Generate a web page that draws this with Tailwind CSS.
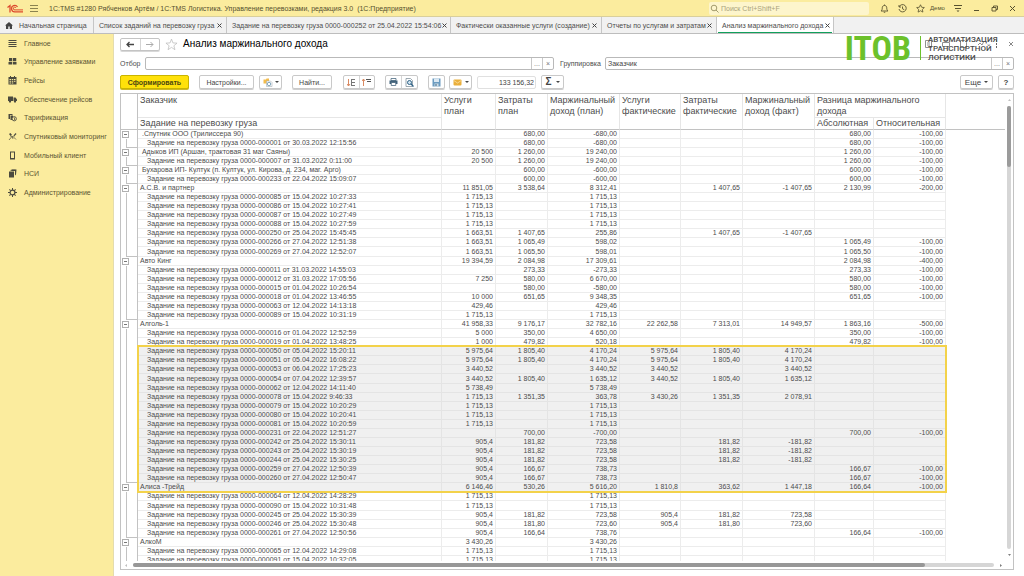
<!DOCTYPE html>
<html lang="ru">
<head>
<meta charset="utf-8">
<title>Анализ маржинального дохода</title>
<script src="https://cdn.jsdelivr.net/npm/@tailwindcss/browser@4"></script>
</head>
<body class="h-screen overflow-hidden flex flex-col bg-white font-['Liberation_Sans',Arial,sans-serif] text-[7px] leading-[9px] text-[#4c4c4c]">

<header class="h-[17px] shrink-0 flex items-center bg-[#fbec9e] border-b border-[#d9cf9c] pl-[7px] pr-[3px] text-[#55502f]">
  <svg class="w-[16px] h-[9px] shrink-0" viewBox="0 0 16 9" fill="none" stroke="#dd4a2e" stroke-width="1.300" aria-label="1С"><path d="M0.500 3.500L3 1.500V8.500"/><path d="M10.500 3A3.200 3.200 0 1 0 8 7.800H16"/><path d="M9 4A1.400 1.400 0 1 0 8 5.900H16" stroke-width="1"/></svg>
  <button class="ml-[6px] flex" aria-label="Меню"><svg class="w-[10px] h-[8px]" viewBox="0 0 10 8" stroke="#8b8350" stroke-width="1"><path d="M1 1.500h8M1 4.500h8M1 7.500h8"/></svg></button>
  <span class="ml-[10px] whitespace-pre">1С:TMS #1280 Рябченков Артём / 1С:TMS Логистика. Управление перевозками, редакция 3.0  (1С:Предприятие)</span>
  <label class="ml-auto w-[160px] h-[13px] bg-[#fdf5cc] rounded-[2px] flex items-center gap-[2px] pl-[1px]">
    <svg class="w-[9px] h-[9px]" viewBox="0 0 9 9" fill="none" stroke="#a39b6d"><circle cx="4" cy="4" r="2.800"/><path d="M6 6l2.500 2.500"/></svg>
    <input type="search" placeholder="Поиск Ctrl+Shift+F" aria-label="Поиск" class="w-[140px] bg-transparent outline-none placeholder:text-[#aaa37c]">
  </label>
  <div class="ml-[6px] flex items-center">
    <button class="w-[18px] flex justify-center" aria-label="Уведомления"><svg class="w-[9px] h-[9px]" viewBox="0 0 18 18" fill="none" stroke="#57512f" stroke-width="1.800"><path d="M2 14h14c-2-2-2.500-3-2.500-6.500C13.500 4.500 11.500 3 9 3S4.500 4.500 4.500 7.500C4.500 11 4 12 2 14zM9 1v2M7.500 16.500h3"/></svg></button>
    <button class="w-[18px] flex justify-center" aria-label="История"><svg class="w-[9px] h-[9px]" viewBox="0 0 18 18" fill="none" stroke="#57512f" stroke-width="1.800"><path d="M2.500 5.500A7.300 7.300 0 1 1 2 10M2 2v4h4M9 5v4.500l3.500 2"/></svg></button>
    <button class="w-[18px] flex justify-center" aria-label="Избранное"><svg class="w-[9px] h-[9px]" viewBox="0 0 18 18" fill="none" stroke="#57512f" stroke-width="1.600"><path d="M9 1.500l2.300 5 5.400.6-4 3.700 1.100 5.400L9 13.500l-4.800 2.700 1.100-5.400-4-3.700 5.400-.6z"/></svg></button>
    <a href="#" class="ml-[1px] text-[6px] w-[19px]">Демо</a>
    <button class="w-[18px] flex justify-center" aria-label="Настройки окна"><svg class="w-[10px] h-[9px]" viewBox="0 0 10 9" stroke="#57512f" fill="#57512f"><path d="M1 1.500h8M2 4.500h6" /><path d="M3.500 6.500h3L5 8z" stroke="none"/></svg></button>
    <button class="w-[18px] flex justify-center" aria-label="Свернуть"><svg class="w-[7px] h-[7px]" viewBox="0 0 7 7" stroke="#57512f"><path d="M1 5.500h5"/></svg></button>
    <button class="w-[18px] flex justify-center" aria-label="Восстановить"><svg class="w-[7px] h-[7px]" viewBox="0 0 14 14" fill="none" stroke="#57512f" stroke-width="1.800"><path d="M2 5h8v7H2zM5 5V2h8v7h-3"/></svg></button>
    <button class="w-[18px] flex justify-center" aria-label="Закрыть окно"><svg class="w-[7px] h-[7px]" viewBox="0 0 7 7" stroke="#57512f"><path d="M1 1l5 5M6 1L1 6"/></svg></button>
  </div>
</header>

<div role="tablist" class="h-[17px] shrink-0 flex bg-[#f1f1f1] border-b border-[#bdbdbd] whitespace-nowrap">
  <button role="tab" class="w-[94px] shrink-0 border-r border-[#c6c6c6] flex items-center pl-[5px] gap-[6px]"><svg class="w-[8px] h-[7px]" viewBox="0 0 16 14" fill="#444"><path d="M8 0L0 7h2v7h4.500V9h3v5H14V7h2z"/></svg>Начальная страница</button>
  <div class="w-[133px] shrink-0 border-r border-[#c6c6c6] flex items-center justify-between pl-[5px] pr-[4px]"><button role="tab">Список заданий на перевозку груза</button><button class="tabx" aria-label="Закрыть"></button></div>
  <div class="w-[224px] shrink-0 border-r border-[#c6c6c6] flex items-center justify-between pl-[5px] pr-[3px]"><button role="tab">Задание на перевозку груза 0000-000252 от 25.04.2022 15:54:06</button><button class="tabx" aria-label="Закрыть"></button></div>
  <div class="w-[151px] shrink-0 border-r border-[#c6c6c6] flex items-center justify-between pl-[5px] pr-[4px]"><button role="tab">Фактически оказанные услуги (создание)</button><button class="tabx" aria-label="Закрыть"></button></div>
  <div class="w-[115px] shrink-0 border-r border-[#c6c6c6] flex items-center justify-between pl-[5px] pr-[4px]"><button role="tab">Отчеты по услугам и затратам</button><button class="tabx" aria-label="Закрыть"></button></div>
  <div class="w-[117px] shrink-0 border-r border-[#c6c6c6] bg-white flex items-center justify-between pl-[5px] pr-[3px] relative"><button role="tab" aria-selected="true">Анализ маржинального дохода</button><button class="tabx" aria-label="Закрыть"></button><i class="absolute left-[1px] right-[1px] bottom-0 h-[1px] bg-[#12a05c]"></i></div>
</div>

<div class="flex-1 min-h-0 flex">
  <nav class="w-[114px] shrink-0 bg-[#fbec9e] border-r border-[#e4dcae]">
    <ul class="h-[168px] grid grid-rows-9 items-center pl-[8px] text-[#5b5533]" id="menu"></ul>
  </nav>

  <main class="flex-1 min-w-0 flex flex-col pl-[6px] pr-[10px] pb-[6px] relative">
    <div class="h-[20px] shrink-0 flex items-center">
      <div class="flex h-[13px] w-[40px] border border-[#c4c4c4] rounded-[2px] shadow-[0_1px_0_#d8d8d8]">
        <button class="flex-1 flex items-center justify-center border-r border-[#d4d4d4]" aria-label="Назад"><svg class="w-[8px] h-[7px]" viewBox="0 0 8 7" fill="none" stroke="#444" stroke-width="1.300"><path d="M8 3.500H1M3.500 1L1 3.500 3.500 6"/></svg></button>
        <button class="flex-1 flex items-center justify-center" aria-label="Вперёд"><svg class="w-[8px] h-[7px]" viewBox="0 0 8 7" fill="none" stroke="#aaa"><path d="M0 3.500h7M4.500 1L7 3.500 4.500 6"/></svg></button>
      </div>
      <button class="ml-[5px]" aria-label="В избранное"><svg class="w-[13px] h-[13px]" viewBox="0 0 18 18" fill="none" stroke="#b9b9b9"><path d="M9 1.500l2 5.300 5.700.3-4.400 3.600 1.500 5.500L9 13l-4.800 3.200 1.500-5.500L1.300 7.100 7 6.800z"/></svg></button>
      <h1 class="ml-[5px] text-[10px] leading-[12px] text-black whitespace-nowrap">Анализ маржинального дохода</h1>
      <div class="ml-auto flex items-center gap-[10px] text-[#8f8f8f]">
        <svg class="w-[7px] h-[8px]" viewBox="0 0 7 8" fill="none" stroke="currentColor"><path d="M.500.500h6v7h-6zM2 3h3M2 5h3"/></svg>
        <svg class="w-[8px] h-[8px]" viewBox="0 0 8 8" fill="none" stroke="currentColor"><path d="M.500 2.500h7v4h-7zM2 .500h4"/></svg>
        <svg class="w-[7px] h-[8px]" viewBox="0 0 7 8" fill="none" stroke="currentColor"><path d="M.500.500h4l2 2v5h-6z"/></svg>
        <svg class="w-[8px] h-[8px]" viewBox="0 0 8 8" fill="none" stroke="currentColor"><path d="M1 5l2-2 2 2 2-4"/></svg>
        <button aria-label="Ещё действия"><svg class="w-[3px] h-[8px]" viewBox="0 0 3 8" fill="#666"><path d="M1 0h1v2H1zM1 3h1v2H1zM1 6h1v2H1z"/></svg></button>
        <button aria-label="Закрыть форму"><svg class="w-[6px] h-[6px]" viewBox="0 0 6 6" stroke="#888"><path d="M1 1l4 4M5 1L1 5"/></svg></button>
      </div>
    </div>

    <div class="h-[19px] shrink-0 flex items-center">
      <label for="flt" class="w-[25px]">Отбор</label>
      <div class="w-[409px] h-[13px] flex border border-[#b9b9b9] rounded-[2px] text-[#777]">
        <input id="flt" class="flex-1 min-w-0 outline-none px-[2px]">
        <button class="w-[11px] border-l border-[#c8c8c8] text-center" aria-label="Выбрать отбор">...</button>
        <button class="w-[11px] border-l border-[#c8c8c8] text-center" aria-label="Очистить отбор">×</button>
      </div>
      <label for="grp" class="ml-[6px] w-[45px]">Группировка</label>
      <div class="flex-1 h-[13px] flex border border-[#b9b9b9] rounded-[2px] text-[#777]">
        <input id="grp" value="Заказчик" class="flex-1 min-w-0 outline-none px-[2px] text-[#444]">
        <button class="w-[11px] border-l border-[#c8c8c8] text-center" aria-label="Выбрать группировку">...</button>
        <button class="w-[11px] border-l border-[#c8c8c8] text-center" aria-label="Очистить группировку">×</button>
      </div>
    </div>

    <div class="h-[18px] shrink-0 flex items-center text-[#444]">
      <button class="w-[69px] h-[14px] rounded-[2px] border border-[#c9b400] bg-[#ffe10a] shadow-[0_1px_0_#cdb92c] font-bold text-[#4c4610]">Сформировать</button>
      <button class="ml-[10px] w-[55px] h-[14px] rounded-[2px] border border-[#c9c9c9] shadow-[0_1px_0_#cfcfcf]">Настройки...</button>
      <button class="ml-[5px] w-[23px] h-[14px] rounded-[2px] border border-[#c9c9c9] shadow-[0_1px_0_#cfcfcf] flex items-center justify-center gap-[2px]" aria-label="Варианты"><svg class="w-[10px] h-[9px]" viewBox="0 0 20 18" fill="none"><path d="M1 3h5l1-2h5v10H1z" fill="#f3bc4c"/><path d="M7 6h8l3 3v8H7z" fill="#fff" stroke="#9aa3a8"/><circle cx="12" cy="12" r="3.500" stroke="#5b89a6" stroke-width="1.500"/></svg><svg class="w-[4px] h-[2px]" viewBox="0 0 4 2" fill="#444"><path d="M0 0h4L2 2z"/></svg></button>
      <button class="ml-[10px] w-[40px] h-[14px] rounded-[2px] border border-[#c9c9c9] shadow-[0_1px_0_#cfcfcf]">Найти...</button>
      <div class="ml-[11px] w-[32px] h-[14px] flex rounded-[2px] border border-[#c9c9c9] shadow-[0_1px_0_#cfcfcf]">
        <button class="flex-1 border-r border-[#d4d4d4] flex items-center justify-center" aria-label="Развернуть группы"><svg class="w-[9px] h-[9px]" viewBox="0 0 9 9" fill="none"><path d="M1.500 1v7M0 6l1.500 2L3 6" stroke="#d98a62"/><path d="M4 1.500h4M5 4.500h3M5 7.500h3M4.500 2v6" stroke="#777"/></svg></button>
        <button class="flex-1 flex items-center justify-center" aria-label="Свернуть группы"><svg class="w-[9px] h-[9px]" viewBox="0 0 9 9" fill="none"><path d="M1.500 8V1M0 3l1.500-2L3 3" stroke="#d98a62"/><path d="M4 1.500h5M5 3.500h4" stroke="#555"/></svg></button>
      </div>
      <div class="ml-[10px] w-[33px] h-[14px] flex rounded-[2px] border border-[#c9c9c9] shadow-[0_1px_0_#cfcfcf]">
        <button class="flex-1 border-r border-[#d4d4d4] flex items-center justify-center" aria-label="Печать"><svg class="w-[9px] h-[8px]" viewBox="0 0 18 16"><path d="M4 1h10v4H4z" fill="#fff" stroke="#41627a" stroke-width="1.500"/><path d="M1 5h16v7H1z" fill="#41627a"/><path d="M4.500 9h9v6h-9z" fill="#fff" stroke="#41627a" stroke-width="1.500"/></svg></button>
        <button class="flex-1 flex items-center justify-center" aria-label="Просмотр"><svg class="w-[9px] h-[9px]" viewBox="0 0 18 18" fill="none"><path d="M2 1h9l4 4v12H2z" fill="#fff" stroke="#7d8d98" stroke-width="1.500"/><circle cx="9" cy="9" r="4" fill="#cfe3f0" stroke="#2f6286" stroke-width="2"/><path d="M12 12l5 5" stroke="#2f6286" stroke-width="2.500"/></svg></button>
      </div>
      <button class="ml-[10px] w-[17px] h-[14px] rounded-[2px] border border-[#c9c9c9] shadow-[0_1px_0_#cfcfcf] flex items-center justify-center" aria-label="Сохранить"><svg class="w-[9px] h-[9px]" viewBox="0 0 18 18"><path d="M1 1h16v16H1z" fill="#6b9bc0"/><path d="M4 1h10v7H4z" fill="#dbe8f2"/><path d="M5 11h8v6H5z" fill="#cfdce6"/><path d="M7 12h2v4H7z" fill="#3d6482"/></svg></button>
      <button class="ml-[4px] w-[23px] h-[14px] rounded-[2px] border border-[#c9c9c9] shadow-[0_1px_0_#cfcfcf] flex items-center justify-center gap-[3px]" aria-label="Отправить"><svg class="w-[9px] h-[7px]" viewBox="0 0 18 14"><rect x="1" y="1" width="16" height="12" rx="2" fill="#eaaf3b"/><path d="M1.500 3L9 8l7.500-5" fill="none" stroke="#fbe3ac" stroke-width="1.500"/></svg><svg class="w-[4px] h-[2px]" viewBox="0 0 4 2" fill="#444"><path d="M0 0h4L2 2z"/></svg></button>
      <input value="133 156,32" aria-label="Сумма" readonly class="ml-[5px] w-[59px] h-[13px] border border-[#e0e0e0] rounded-[2px] text-right pr-[1px] outline-none">
      <button class="ml-[5px] w-[23px] h-[14px] rounded-[2px] border border-[#c9c9c9] shadow-[0_1px_0_#cfcfcf] flex items-center justify-center gap-[4px] font-bold text-[10px] leading-[10px]" aria-label="Вычислить сумму">Σ<svg class="w-[4px] h-[2px]" viewBox="0 0 4 2" fill="#444"><path d="M0 0h4L2 2z"/></svg></button>
      <button class="ml-auto w-[33px] h-[14px] rounded-[2px] border border-[#c9c9c9] shadow-[0_1px_0_#cfcfcf] flex items-center justify-center gap-[3px] text-[8px]">Еще<svg class="w-[4px] h-[2px]" viewBox="0 0 4 2" fill="#444"><path d="M0 0h4L2 2z"/></svg></button>
      <button class="ml-[5px] w-[16px] h-[14px] rounded-[2px] border border-[#c9c9c9] shadow-[0_1px_0_#cfcfcf] font-bold text-[8px]" aria-label="Справка">?</button>
    </div>

    <section class="mt-[2px] flex-1 min-h-0 flex flex-col border border-[#c2c2c2]">
      <div class="flex-1 min-h-0 flex">
        <div class="flex-1 min-w-0 overflow-hidden relative">
          <table class="w-full table-fixed border-separate border-spacing-0 whitespace-nowrap">
            <colgroup><col class="w-[5px]"><col class="w-[12px]"><col class="w-[304px]"><col class="w-[54px]"><col class="w-[52px]"><col class="w-[72px]"><col class="w-[61px]"><col class="w-[62px]"><col class="w-[72px]"><col class="w-[59px]"><col class="w-[72px]"><col></colgroup>
            <thead class="text-[9px] leading-[11px] text-left">
              <tr class="h-[24px]">
                <td colspan="2" rowspan="2" class="border-r border-b border-[#c2c2c2]"></td>
                <th class="font-normal align-top pt-[1px] pl-[2px] border-r border-b border-[#e6e6e6]">Заказчик</th>
                <th rowspan="2" class="font-normal align-top pt-[1px] pl-[2px] border-r border-b border-r-[#e6e6e6] border-b-[#c2c2c2]">Услуги<br>план</th>
                <th rowspan="2" class="font-normal align-top pt-[1px] pl-[2px] border-r border-b border-r-[#e6e6e6] border-b-[#c2c2c2]">Затраты<br>план</th>
                <th rowspan="2" class="font-normal align-top pt-[1px] pl-[2px] border-r border-b border-r-[#e6e6e6] border-b-[#c2c2c2]">Маржинальный<br>доход (план)</th>
                <th rowspan="2" class="font-normal align-top pt-[1px] pl-[2px] border-r border-b border-r-[#e6e6e6] border-b-[#c2c2c2]">Услуги<br>фактические</th>
                <th rowspan="2" class="font-normal align-top pt-[1px] pl-[2px] border-r border-b border-r-[#e6e6e6] border-b-[#c2c2c2]">Затраты<br>фактические</th>
                <th rowspan="2" class="font-normal align-top pt-[1px] pl-[2px] border-r border-b border-r-[#e6e6e6] border-b-[#c2c2c2]">Маржинальный<br>доход (факт)</th>
                <th colspan="2" class="font-normal align-top pt-[1px] pl-[2px] border-r border-b border-[#e6e6e6]">Разница маржинального<br>дохода</th>
                <td rowspan="2" class="border-b border-[#c2c2c2]"></td>
              </tr>
              <tr class="h-[12px]">
                <th class="font-normal align-top pl-[2px] border-r border-b border-r-[#e6e6e6] border-b-[#c2c2c2]">Задание на перевозку груза</th>
                <th class="font-normal align-top pl-[2px] border-r border-b border-r-[#e6e6e6] border-b-[#c2c2c2]">Абсолютная</th>
                <th class="font-normal align-top pl-[2px] border-r border-b border-r-[#e6e6e6] border-b-[#c2c2c2]">Относительная</th>
              </tr>
            </thead>
            <tbody id="rows" class="leading-[8px]"></tbody>
          </table>
          <div class="absolute top-[251px] left-[16px] w-[810px] h-[148px] border-2 border-[#f3d24a] pointer-events-none"></div>
        </div>
        <div class="w-[8px] shrink-0 flex flex-col items-center">
          <svg class="mt-[5px] w-[3px] h-[2px]" viewBox="0 0 4 2" fill="#aaa"><path d="M0 2h4L2 0z"/></svg>
          <div class="mt-[5px] flex-1 w-[4px] rounded-full bg-[#d6d6d6]"><div class="h-[61px] rounded-full bg-[#9b9b9b]"></div></div>
          <svg class="mt-[5px] mb-[5px] w-[3px] h-[2px]" viewBox="0 0 4 2" fill="#555"><path d="M0 0h4L2 2z"/></svg>
        </div>
      </div>
      <div class="h-[8px] shrink-0 flex items-center pl-[4px] pr-[11px]">
        <svg class="w-[2px] h-[3px]" viewBox="0 0 2 4" fill="#aaa"><path d="M2 0v4L0 2z"/></svg>
        <div class="ml-[6px] flex-1 h-[4px] rounded-full bg-[#d6d6d6]"><div class="h-[4px] w-[92%] rounded-full bg-[#979797]"></div></div>
        <svg class="ml-[6px] w-[2px] h-[3px]" viewBox="0 0 2 4" fill="#555"><path d="M0 0v4l2-2z"/></svg>
      </div>
    </section>

    <div class="absolute top-0 right-[29px] flex items-center" aria-label="ITOB">
      <strong class="font-['Liberation_Sans_Narrow','Roboto_Condensed',Roboto,sans-serif] text-[34px] leading-[28px] text-[#6cc12b]">ITOB</strong>
      <i class="ml-[9px] w-[1px] h-[24px] bg-[#6cc12b]"></i>
      <p class="ml-[7px] w-[67px] whitespace-nowrap font-[Roboto,sans-serif] font-medium text-[8px] leading-[9px] text-[#4a4a4a]">АВТОМАТИЗАЦИЯ<br>ТРАНСПОРТНОЙ<br>ЛОГИСТИКИ</p>
    </div>
  </main>
</div>

<script>
const icons = {
  list: '<path d="M1 2h16v2H1zM1 6h16v2H1zM1 10h16v2H1zM1 14h16v2H1z"/>',
  blocks: '<path d="M2 2h6.500v6.500H2zM10 2h6.500v6.500H10zM1 10h7.500v5H1zM10 10h7v5h-7z"/>',
  calendar: '<path fill-rule="evenodd" d="M4 0h2v2h6V0h2v2h3v15H1V2h3zM3 6v2h3V6zm4.500 0v2h3V6zM12 6v2h3V6zM3 9.500v2h3v-2zm4.500 0v2h3v-2zm4.500 0v2h3v-2zM3 13v2h3v-2zm4.500 0v2h3v-2z"/>',
  truck: '<path d="M0 3h10v9H0zM11 5h4l3 4v3h-7z"/><circle cx="4" cy="13" r="2.300"/><circle cx="14" cy="13" r="2.300"/>',
  tariff: '<path d="M1 2h7l2 2H4v8H1z"/><path d="M5 5h5v3a5 5 0 0 0-2 6H5z"/><circle cx="12.500" cy="11.500" r="4.200" fill="none" stroke="currentColor" stroke-width="1.800"/><path d="M12 9h1.500v5H12z"/>',
  sat: '<path d="M2 4l3-2 3 4-3 2zM11 7l4-5 2 2-5 5z"/><path d="M2 16l5-6M5 9l8 1M8 8l2 6M12 11l4 4" fill="none" stroke="currentColor" stroke-width="1.400"/>',
  phone: '<path fill-rule="evenodd" d="M4 1h10v16H4zM6 3v11h6V3z"/>',
  books: '<path d="M8 1h9l-1 10-2 2V4H6zM2 5h10v12H2z"/><path d="M4 3l2-1.500h9V3z"/>',
  gear: '<circle cx="9" cy="9" r="4.800" fill="none" stroke="currentColor" stroke-width="2.400"/><path d="M8 0h2v4H8zM8 14h2v4H8zM0 8h4v2H0zM14 8h4v2h-4zM2 3.500L3.500 2l2.500 2.500L4.500 6zM14.500 2L16 3.500 13.500 6 12 4.500zM2 14.500L4.500 12 6 13.500 3.500 16zM12 13.500l1.500-1.500 2.500 2.500-1.500 1.500z"/>'
};
const menu = [['list','Главное'],['blocks','Управление заявками'],['calendar','Рейсы'],['truck','Обеспечение рейсов'],['tariff','Тарификация'],['sat','Спутниковый мониторинг'],['phone','Мобильный клиент'],['books','НСИ'],['gear','Администрирование']];
document.getElementById('menu').innerHTML = menu.map(([i, t]) =>
  `<li><a href="#" class="flex items-center gap-[7px] whitespace-nowrap"><svg class="w-[9px] h-[9px] text-[#4b4a3e]" viewBox="0 0 18 18" fill="currentColor">${icons[i]}</svg>${t}</a></li>`).join('');

document.querySelectorAll('.tabx').forEach(b => {
  b.innerHTML = '<svg class="w-[5px] h-[5px]" viewBox="0 0 5 5" stroke="#444"><path d="M.500.500l4 4M4.500.500l-4 4"/></svg>';
});

// Lines starting with "#" are customers, the others are their transport orders.
const data = `
# .Спутник ООО (Трилиссера 90)||680,00|-680,00||||680,00|-100,00
000001 от 30.03.2022 12:15:56||680,00|-680,00||||680,00|-100,00
# Адыков ИП (Аршан, трактовая 31 маг Саяны)|20 500|1 260,00|19 240,00||||1 260,00|-100,00
000007 от 31.03.2022 0:11:00|20 500|1 260,00|19 240,00||||1 260,00|-100,00
# Бухарова ИП- Култук (п. Култук, ул. Кирова, д. 234, маг. Арго)||600,00|-600,00||||600,00|-100,00
000233 от 22.04.2022 15:09:07||600,00|-600,00||||600,00|-100,00
#А.С.В. и партнер|11 851,05|3 538,64|8 312,41||1 407,65|-1 407,65|2 130,99|-200,00
000085 от 15.04.2022 10:27:33|1 715,13||1 715,13|||||
000086 от 15.04.2022 10:27:41|1 715,13||1 715,13|||||
000087 от 15.04.2022 10:27:49|1 715,13||1 715,13|||||
000088 от 15.04.2022 10:27:59|1 715,13||1 715,13|||||
000250 от 25.04.2022 15:45:45|1 663,51|1 407,65|255,86||1 407,65|-1 407,65||
000266 от 27.04.2022 12:51:38|1 663,51|1 065,49|598,02||||1 065,49|-100,00
000269 от 27.04.2022 12:52:07|1 663,51|1 065,50|598,01||||1 065,50|-100,00
#Авто Кинг|19 394,59|2 084,98|17 309,61||||2 084,98|-400,00
000011 от 31.03.2022 14:55:03||273,33|-273,33||||273,33|-100,00
000012 от 31.03.2022 17:05:56|7 250|580,00|6 670,00||||580,00|-100,00
000015 от 01.04.2022 10:26:54||580,00|-580,00||||580,00|-100,00
000018 от 01.04.2022 13:46:55|10 000|651,65|9 348,35||||651,65|-100,00
000063 от 12.04.2022 14:13:18|429,46||429,46|||||
000089 от 15.04.2022 10:31:19|1 715,13||1 715,13|||||
#Алголь-1|41 958,33|9 176,17|32 782,16|22 262,58|7 313,01|14 949,57|1 863,16|-500,00
000016 от 01.04.2022 12:52:59|5 000|350,00|4 650,00||||350,00|-100,00
000019 от 01.04.2022 13:48:25|1 000|479,82|520,18||||479,82|-100,00
000050 от 05.04.2022 15:20:11|5 975,64|1 805,40|4 170,24|5 975,64|1 805,40|4 170,24||
000051 от 05.04.2022 16:08:22|5 975,64|1 805,40|4 170,24|5 975,64|1 805,40|4 170,24||
000053 от 06.04.2022 17:25:23|3 440,52||3 440,52|3 440,52||3 440,52||
000054 от 07.04.2022 12:39:57|3 440,52|1 805,40|1 635,12|3 440,52|1 805,40|1 635,12||
000062 от 12.04.2022 14:11:40|5 738,49||5 738,49|||||
000078 от 15.04.2022 9:46:33|1 715,13|1 351,35|363,78|3 430,26|1 351,35|2 078,91||
000079 от 15.04.2022 10:20:29|1 715,13||1 715,13|||||
000080 от 15.04.2022 10:20:41|1 715,13||1 715,13|||||
000081 от 15.04.2022 10:20:59|1 715,13||1 715,13|||||
000231 от 22.04.2022 12:51:27||700,00|-700,00||||700,00|-100,00
000242 от 25.04.2022 15:30:11|905,4|181,82|723,58||181,82|-181,82||
000243 от 25.04.2022 15:30:19|905,4|181,82|723,58||181,82|-181,82||
000244 от 25.04.2022 15:30:25|905,4|181,82|723,58||181,82|-181,82||
000259 от 27.04.2022 12:50:39|905,4|166,67|738,73||||166,67|-100,00
000260 от 27.04.2022 12:50:47|905,4|166,67|738,73||||166,67|-100,00
#Алиса -Трейд|6 146,46|530,26|5 616,20|1 810,8|363,62|1 447,18|166,64|-100,00
000064 от 12.04.2022 14:28:29|1 715,13||1 715,13|||||
000090 от 15.04.2022 10:31:48|1 715,13||1 715,13|||||
000245 от 25.04.2022 15:30:39|905,4|181,82|723,58|905,4|181,82|723,58||
000246 от 25.04.2022 15:30:48|905,4|181,80|723,60|905,4|181,80|723,60||
000261 от 27.04.2022 12:50:56|905,4|166,64|738,76||||166,64|-100,00
#АлкоМ|3 430,26||3 430,26|||||
000065 от 12.04.2022 14:29:08|1 715,13||1 715,13|||||
000091 от 15.04.2022 10:32:05|1 715,13||1 715,13|||||`.slice(1).split('\n');

document.getElementById('rows').innerHTML = data.map((line, i) => {
  const group = line[0] === '#';
  const [name, ...vals] = line.slice(group ? 1 : 0).split('|');
  const last = !group && data[i + 1] && data[i + 1][0] === '#';
  const picked = i >= 24 && i <= 39;
  const tree = group
    ? '<td colspan="2" class="border-r border-[#c2c2c2] pl-[1px]"><button class="flex items-center w-[7px] h-[7px] border border-[#b0b0b0] px-[1px]" aria-label="Свернуть группу"><i class="flex-1 h-[1px] bg-[#777]"></i></button></td>'
    : `<td></td><td class="${last ? 'border-l border-r border-b border-[#c2c2c2]' : 'border-l border-r border-[#c2c2c2]'}"></td>`;
  const bg = picked ? 'bg-[#f0f0f0] border-r border-b border-[#e4e4e4]' : 'border-r border-b border-[#ececec]';
  const title = group ? name : 'Задание на перевозку груза 0000-' + name;
  return `<tr class="${i % 14 === 13 ? 'h-[10px]' : 'h-[9px]'}">${tree}<td class="${bg} whitespace-pre ${group ? 'pl-[2px]' : 'pl-[9px]'}">${title}</td>` +
    vals.slice(0, 8).map(v => `<td class="${bg} text-right pr-[2px]">${v}</td>`).join('') + '<td></td></tr>';
}).join('');
</script>
</body>
</html>
